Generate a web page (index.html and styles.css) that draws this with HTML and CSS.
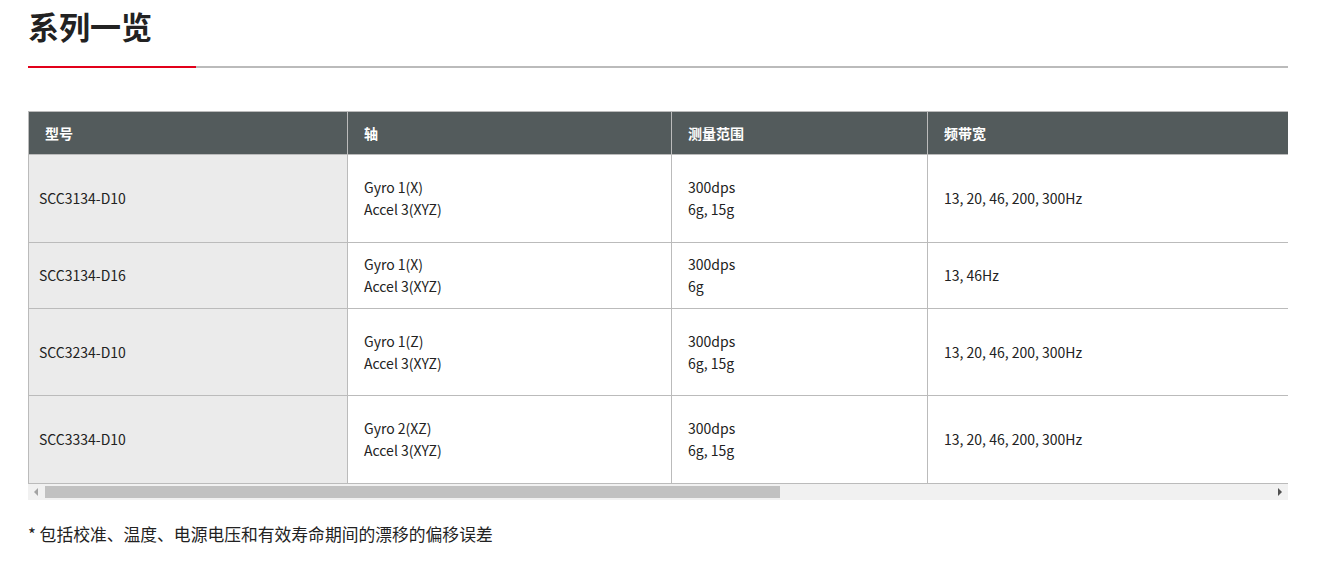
FILE: index.html
```html
<!DOCTYPE html>
<html lang="zh-CN">
<head>
<meta charset="utf-8">
<title>系列一览</title>
<link rel="stylesheet" href="styles.css">
</head>
<body>
<div class="container">
  <h2 class="title">系列一览</h2>
  <div class="rule"><span class="rule-accent"></span></div>
  <div class="table-wrap">
    <table class="spec">
      <colgroup>
        <col class="c1"><col class="c2"><col class="c3"><col class="c4"><col class="c5"><col class="c6">
      </colgroup>
      <thead>
        <tr><th>型号</th><th>轴</th><th>测量范围</th><th>频带宽</th><th>偏移误差*</th><th>封装</th></tr>
      </thead>
      <tbody>
        <tr><td class="model">SCC3134-D10</td><td>Gyro 1(X)<br>Accel 3(XYZ)</td><td>300dps<br>6g, 15g</td><td>13, 20, 46, 200, 300Hz</td><td>±0.5dps<br>±10mg<br>±20mg</td><td>SOIC 32</td></tr>
        <tr><td class="model">SCC3134-D16</td><td>Gyro 1(X)<br>Accel 3(XYZ)</td><td>300dps<br>6g</td><td>13, 46Hz</td><td>±0.5dps<br>±10mg</td><td>SOIC 32</td></tr>
        <tr><td class="model">SCC3234-D10</td><td>Gyro 1(Z)<br>Accel 3(XYZ)</td><td>300dps<br>6g, 15g</td><td>13, 20, 46, 200, 300Hz</td><td>±0.5dps<br>±10mg<br>±20mg</td><td>SOIC 32</td></tr>
        <tr><td class="model">SCC3334-D10</td><td>Gyro 2(XZ)<br>Accel 3(XYZ)</td><td>300dps<br>6g, 15g</td><td>13, 20, 46, 200, 300Hz</td><td>±0.5dps<br>±10mg<br>±20mg</td><td>SOIC 32</td></tr>
      </tbody>
    </table>
  </div>
  <div class="scrollbar" aria-hidden="true">
    <span class="sb-btn sb-left"></span>
    <span class="sb-track"><span class="sb-thumb"></span></span>
    <span class="sb-btn sb-right"></span>
  </div>
  <p class="note">* 包括校准、温度、电源电压和有效寿命期间的漂移的偏移误差</p>
</div>
</body>
</html>
```

FILE: styles.css
```css
html, body {
  margin: 0;
  padding: 0;
  background: #ffffff;
}
body {
  font-family: "Noto Sans CJK SC", "Noto Sans", sans-serif;
  color: #222222;
}
.container {
  width: 1260px;
  margin-left: 28px;
}
.title {
  margin: 0;
  padding-top: 4px;
  font-size: 31px;
  line-height: 44px;
  font-weight: 700;
  color: #222222;
}
.rule {
  margin-top: 18px;
  height: 2px;
  background: #bbbbbb;
  display: flex;
}
.rule-accent {
  width: 168px;
  height: 2px;
  background: #e2001a;
}
.table-wrap {
  margin-top: 43px;
  width: 1260px;
  overflow: hidden;
}
.spec {
  border-collapse: collapse;
  table-layout: fixed;
  width: 2110px;
  font-size: 14px;
  line-height: 22px;
}
.c1 { width: 319px; }
.c2 { width: 324px; }
.c3 { width: 256px; }
.c4 { width: 400px; }
.c5 { width: 400px; }
.c6 { width: 411px; }
.spec th {
  background: #535b5c;
  color: #ffffff;
  font-weight: 700;
  text-align: left;
  padding: 10px 16px;
  border: 1px solid #bbbbbb;
}
.spec td {
  padding: 10px 16px 10.75px;
  border: 1px solid #bbbbbb;
  vertical-align: middle;
  color: #222222;
}
.spec td.model {
  background: #ebebeb;
  padding-left: 10px;
}
.scrollbar {
  display: flex;
  height: 16px;
  background: #f1f1f1;
}
.sb-btn {
  flex: 0 0 16px;
  display: flex;
  align-items: center;
  justify-content: center;
}
.sb-btn::before {
  content: "";
  width: 0;
  height: 0;
  border-top: 4px solid transparent;
  border-bottom: 4px solid transparent;
}
.sb-left::before {
  border-right: 4px solid #a3a3a3;
}
.sb-right::before {
  border-left: 4px solid #505050;
}
.sb-track {
  flex: 1 1 auto;
  display: flex;
  align-items: center;
}
.sb-thumb {
  width: 735px;
  height: 12px;
  margin-left: 1px;
  background: #c1c1c1;
}
.note {
  margin: 22px 0 0 0;
  font-size: 16.8px;
  line-height: 24px;
  color: #222222;
}
```
